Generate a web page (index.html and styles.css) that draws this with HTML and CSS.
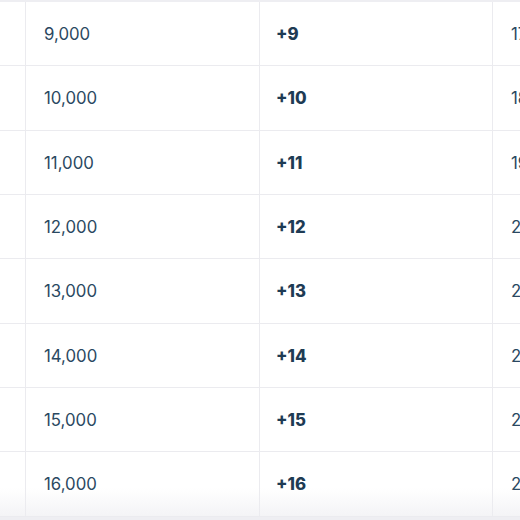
FILE: index.html
```html
<!DOCTYPE html>
<html>
<head>
<meta charset="utf-8">
<link rel="stylesheet" href="styles.css">
</head>
<body>
<div class="viewport">
  <div class="table">
    <div class="row"><div class="cell"></div><div class="cell">9,000</div><div class="cell bold">+9</div><div class="cell">17,000</div></div>
    <div class="row"><div class="cell"></div><div class="cell">10,000</div><div class="cell bold">+10</div><div class="cell">18,000</div></div>
    <div class="row"><div class="cell"></div><div class="cell">11,000</div><div class="cell bold">+11</div><div class="cell">19,000</div></div>
    <div class="row"><div class="cell"></div><div class="cell">12,000</div><div class="cell bold">+12</div><div class="cell">20,000</div></div>
    <div class="row"><div class="cell"></div><div class="cell">13,000</div><div class="cell bold">+13</div><div class="cell">21,000</div></div>
    <div class="row"><div class="cell"></div><div class="cell">14,000</div><div class="cell bold">+14</div><div class="cell">22,000</div></div>
    <div class="row"><div class="cell"></div><div class="cell">15,000</div><div class="cell bold">+15</div><div class="cell">23,000</div></div>
    <div class="row"><div class="cell"></div><div class="cell">16,000</div><div class="cell bold">+16</div><div class="cell">24,000</div></div>
  </div>
  <div class="shade"></div>
</div>
</body>
</html>
```
FILE: styles.css
```css
html, body {
  margin: 0;
  padding: 0;
  background: #eeeef2;
}
.viewport {
  position: relative;
  width: 520px;
  height: 520px;
  overflow: hidden;
  background: #eeeef2;
  padding-top: 2px;
  box-sizing: border-box;
}
.table {
  margin-left: -208px;
  width: 936px;
  background: #ffffff;
  font-family: "Inter", "Lato", sans-serif;
  font-size: 16.8px;
  color: #2a4861;
}
.row {
  display: grid;
  grid-template-columns: 234px 234px 233px 235px;
  height: 64.33px;
  box-sizing: border-box;
  border-bottom: 1px solid #ebebef;
}
.cell {
  display: flex;
  align-items: center;
  padding-left: 18px;
  padding-top: 1px;
  border-right: 1px solid #ebebef;
  white-space: nowrap;
}
.bold {
  padding-left: 16px;
  font-weight: 800;
  color: #1e3b54;
}
.shade {
  position: absolute;
  left: 0;
  right: 0;
  bottom: 4px;
  height: 28px;
  background: linear-gradient(to bottom, rgba(240,240,243,0), rgba(236,236,240,0.6));
  pointer-events: none;
}
```
